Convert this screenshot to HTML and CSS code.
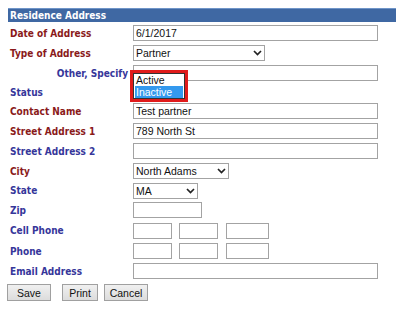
FILE: index.html
```html
<!DOCTYPE html>
<html>
<head>
<meta charset="utf-8">
<link rel="stylesheet" href="styles.css">
</head>
<body>
<div class="panel">
  <div class="header">Residence Address</div>
  <div class="form">
    <div class="row">
      <div class="label req">Date of Address</div>
      <div class="field"><input class="text wide" type="text" value="6/1/2017"></div>
    </div>
    <div class="row">
      <div class="label req">Type of Address</div>
      <div class="field">
        <div class="select sel-type"><span>Partner</span><svg class="chev" width="9" height="6" viewBox="0 0 9 6"><polyline points="1,1 4.5,4.5 8,1" fill="none" stroke="#222" stroke-width="1.7"/></svg></div>
      </div>
    </div>
    <div class="row">
      <div class="label opt indent">Other, Specify</div>
      <div class="field"><input class="text wide" type="text" value=""></div>
    </div>
    <div class="row row-status">
      <div class="label opt">Status</div>
      <div class="field">
        <div class="listbox-wrap">
          <div class="listbox">
            <div class="option">Active</div>
            <div class="option selected">Inactive</div>
          </div>
        </div>
      </div>
    </div>
    <div class="row">
      <div class="label req">Contact Name</div>
      <div class="field"><input class="text wide" type="text" value="Test partner"></div>
    </div>
    <div class="row">
      <div class="label req">Street Address 1</div>
      <div class="field"><input class="text wide" type="text" value="789 North St"></div>
    </div>
    <div class="row">
      <div class="label opt">Street Address 2</div>
      <div class="field"><input class="text wide" type="text" value=""></div>
    </div>
    <div class="row">
      <div class="label req">City</div>
      <div class="field">
        <div class="select sel-city"><span>North Adams</span><svg class="chev" width="9" height="6" viewBox="0 0 9 6"><polyline points="1,1 4.5,4.5 8,1" fill="none" stroke="#222" stroke-width="1.7"/></svg></div>
      </div>
    </div>
    <div class="row row-state">
      <div class="label opt">State</div>
      <div class="field">
        <div class="select sel-state"><span>MA</span><svg class="chev" width="9" height="6" viewBox="0 0 9 6"><polyline points="1,1 4.5,4.5 8,1" fill="none" stroke="#222" stroke-width="1.7"/></svg></div>
      </div>
    </div>
    <div class="row">
      <div class="label opt">Zip</div>
      <div class="field"><input class="text zip" type="text" value=""></div>
    </div>
    <div class="row row-cell">
      <div class="label opt">Cell Phone</div>
      <div class="field phones">
        <input class="text ph3" type="text" value="">
        <input class="text ph3b" type="text" value="">
        <input class="text ph4" type="text" value="">
      </div>
    </div>
    <div class="row">
      <div class="label opt">Phone</div>
      <div class="field phones">
        <input class="text ph3" type="text" value="">
        <input class="text ph3b" type="text" value="">
        <input class="text ph4" type="text" value="">
      </div>
    </div>
    <div class="row">
      <div class="label opt">Email Address</div>
      <div class="field"><input class="text wide" type="text" value=""></div>
    </div>
  </div>
  <div class="buttons">
    <button class="btn btn-save">Save</button>
    <button class="btn btn-print">Print</button>
    <button class="btn btn-cancel">Cancel</button>
  </div>
</div>
</body>
</html>
```
FILE: styles.css
```css
html, body {
  margin: 0;
  padding: 0;
  background: #ffffff;
}
body {
  padding: 8px;
  font-family: "Liberation Sans", Arial, sans-serif;
}
.panel {
  width: 388px;
}
.header {
  height: 14px;
  line-height: 14px;
  background: #3f68a3;
  border-top: 1px solid #6f95c8;
  box-sizing: border-box;
  color: #ffffff;
  font-family: "DejaVu Sans Condensed", "DejaVu Sans", sans-serif;
  font-weight: bold;
  font-size: 10px;
  padding-left: 2px;
}
.form {
  margin-top: 1px;
  display: flex;
  flex-direction: column;
}
.row {
  display: flex;
  align-items: center;
  height: 20px;
}
.row-status {
  height: 18px;
}
.row-state {
  height: 19px;
}
.row-cell {
  height: 21px;
}
.label {
  width: 123px;
  padding-left: 2px;
  font-family: "DejaVu Sans Condensed", "DejaVu Sans", sans-serif;
  font-weight: bold;
  font-size: 10px;
  white-space: nowrap;
}
.label.req {
  color: #8a1a1a;
}
.label.opt {
  color: #36369a;
}
.label.indent {
  text-align: right;
  padding-right: 5px;
  width: 118px;
}
.field {
  display: flex;
  align-items: center;
  position: relative;
}
.text {
  box-sizing: border-box;
  height: 16px;
  margin: 0;
  padding: 0 0 0 2px;
  border: 1px solid #a3a3a3;
  background: #ffffff;
  font-family: "Liberation Sans", Arial, sans-serif;
  font-size: 10.5px;
  color: #111;
  outline: none;
}
.wide {
  width: 245px;
}
.zip {
  width: 69px;
}
.phones {
  gap: 7px;
}
.ph3 {
  width: 39px;
}
.ph3b {
  width: 39px;
}
.ph4 {
  width: 43px;
  margin-left: 1px;
}
.select {
  box-sizing: border-box;
  height: 16px;
  display: flex;
  align-items: center;
  border: 1px solid #a3a3a3;
  background: #ffffff;
  padding: 0 2px 0 2px;
  font-size: 10.5px;
  color: #111;
}
.select .chev {
  margin-left: auto;
}
.sel-type {
  width: 132px;
}
.sel-city {
  width: 96px;
}
.sel-state {
  width: 65px;
}
.listbox-wrap {
  position: absolute;
  left: -3px;
  top: -22px;
  width: 58px;
  height: 32px;
  box-sizing: border-box;
  border: 3px solid #e01b1b;
  background: #ffffff;
  z-index: 2;
}
.listbox {
  box-sizing: border-box;
  width: 52px;
  height: 26px;
  border: 1px solid #333;
  background: #ffffff;
  padding: 0 1px;
}
.option {
  height: 12px;
  line-height: 12px;
  font-size: 10.5px;
  color: #111;
  padding-left: 1px;
}
.option.selected {
  background: #3399ee;
  color: #ffffff;
}
.buttons {
  display: flex;
  margin-top: 3px;
  margin-left: -1px;
}
.btn {
  box-sizing: border-box;
  height: 17px;
  margin: 0;
  padding: 0;
  border: 1px solid #a0a0a0;
  background: linear-gradient(#f0f0f0, #dcdcdc);
  font-family: "Liberation Sans", Arial, sans-serif;
  font-size: 10.5px;
  color: #111;
}
.btn-save {
  width: 44px;
}
.btn-print {
  width: 36px;
  margin-left: 11px;
}
.btn-cancel {
  width: 44px;
  margin-left: 6px;
}
```
